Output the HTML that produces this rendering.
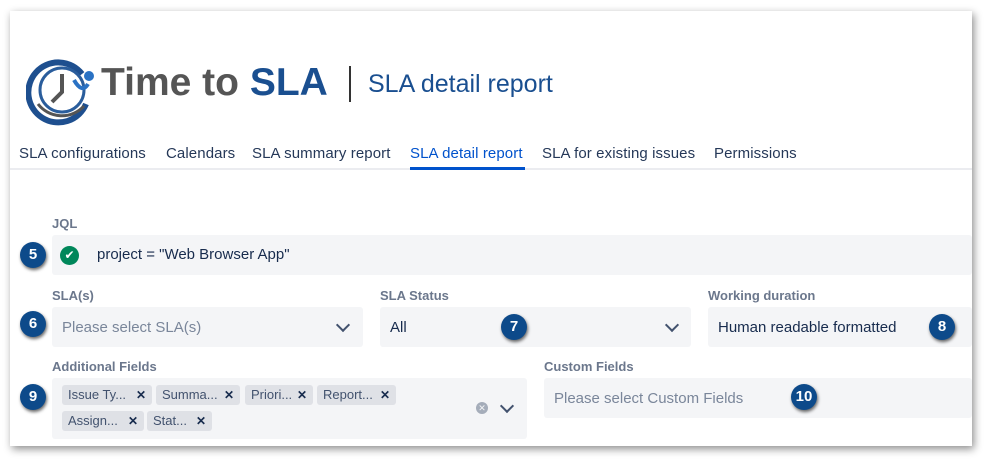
<!DOCTYPE html>
<html><head><style>
body{margin:0;width:999px;height:474px;background:#fff;font-family:"Liberation Sans",sans-serif;position:relative;overflow:hidden}
.card{position:absolute;left:10px;top:11px;width:962px;height:435px;background:#fff;box-shadow:2px 3px 8px rgba(0,0,0,.45)}
.a{position:absolute}
.lbl{position:absolute;font-size:13px;color:#6b778c;font-weight:bold}
.inp{position:absolute;background:#f4f5f7;border-radius:3px}
.ph{position:absolute;font-size:15px;color:#7a869a}
.val{position:absolute;font-size:15px;color:#172b4d}
.b{position:absolute;width:26px;height:26px;border-radius:50%;background:#0d4a8a;color:#fff;font-weight:bold;font-size:15px;text-align:center;line-height:26px;box-shadow:1px 2px 3px rgba(0,0,0,.6)}
.chip{position:absolute;height:20px;background:#dfe1e6;border-radius:3px;font-size:13px;color:#42526e;line-height:20px;padding-left:6px;box-sizing:border-box}
.chip b{position:absolute;right:6px;top:0;font-size:12px;color:#172b4d}
.tab{position:absolute;top:145px;font-size:15px;color:#253858;letter-spacing:0.1px}
.chev{position:absolute;width:8px;height:8px;border-right:2px solid #42526e;border-bottom:2px solid #42526e;transform:rotate(45deg)}
</style></head><body>
<div class="card"></div>
<svg class="a" style="left:26px;top:54px" width="72" height="72" viewBox="0 0 72 72">
<path d="M56 20 A30 30 0 1 0 60 50" fill="none" stroke="#1e4f8f" stroke-width="6"/>
<path d="M12 50 A30 30 0 0 0 58 52" fill="none" stroke="#555" stroke-width="3"/>
<circle cx="36" cy="36" r="22" fill="none" stroke="#2a5d9c" stroke-width="3"/>
<path d="M36 20 V38 L26 48" fill="none" stroke="#555" stroke-width="4"/>
<circle cx="63" cy="22" r="5" fill="#2a72c4"/>
<path d="M48 26 Q56 40 62 30" fill="none" stroke="#2a72c4" stroke-width="4"/>
</svg>
<div class="a" style="left:101px;top:61px;font-size:39px;font-weight:bold;color:#555">Time to <span style="color:#1a4f90">SLA</span></div>
<div class="a" style="left:349px;top:66px;width:2px;height:36px;background:#333"></div>
<div class="a" style="left:368px;top:70px;font-size:25px;color:#1a4f90">SLA detail report</div>
<div class="tab" style="left:19px">SLA configurations</div>
<div class="tab" style="left:166px">Calendars</div>
<div class="tab" style="left:252px">SLA summary report</div>
<div class="tab" style="left:410px;color:#0052cc">SLA detail report</div>
<div class="tab" style="left:542px">SLA for existing issues</div>
<div class="tab" style="left:714px">Permissions</div>
<div class="a" style="left:10px;top:168px;width:962px;height:2px;background:#ebecf0"></div>
<div class="a" style="left:410px;top:167px;width:115px;height:3px;background:#0052cc"></div>
<div class="lbl" style="left:52px;top:216px">JQL</div>
<div class="inp" style="left:52px;top:235px;width:920px;height:40px"></div>
<div class="a" style="left:60px;top:246px;width:19px;height:19px;border-radius:50%;background:#00875a;color:#fff;font-size:12px;text-align:center;line-height:19px">✔</div>
<div class="val" style="left:97px;top:246px">project = "Web Browser App"</div>
<div class="lbl" style="left:52px;top:288px">SLA(s)</div>
<div class="inp" style="left:52px;top:307px;width:311px;height:40px"></div>
<div class="ph" style="left:62px;top:319px">Please select SLA(s)</div>
<div class="chev" style="left:338px;top:320px"></div>
<div class="lbl" style="left:380px;top:288px">SLA Status</div>
<div class="inp" style="left:380px;top:307px;width:311px;height:40px"></div>
<div class="val" style="left:390px;top:319px">All</div>
<div class="chev" style="left:667px;top:320px"></div>
<div class="lbl" style="left:708px;top:288px">Working duration</div>
<div class="inp" style="left:708px;top:307px;width:264px;height:40px"></div>
<div class="val" style="left:718px;top:319px">Human readable formatted</div>
<div class="lbl" style="left:52px;top:359px">Additional Fields</div>
<div class="inp" style="left:52px;top:378px;width:475px;height:61px"></div>
<div class="chip" style="left:62px;top:385px;width:90px">Issue Ty...<b>✕</b></div>
<div class="chip" style="left:156px;top:385px;width:84px">Summa...<b>✕</b></div>
<div class="chip" style="left:245px;top:385px;width:68px">Priori...<b>✕</b></div>
<div class="chip" style="left:317px;top:385px;width:79px">Report...<b>✕</b></div>
<div class="chip" style="left:62px;top:411px;width:82px">Assign...<b>✕</b></div>
<div class="chip" style="left:147px;top:411px;width:65px">Stat...<b>✕</b></div>
<div class="a" style="left:476px;top:402px;width:12px;height:12px;border-radius:50%;background:#a5adba;color:#f4f5f7;font-size:9px;text-align:center;line-height:12px">✕</div>
<div class="chev" style="left:502px;top:401px"></div>
<div class="lbl" style="left:544px;top:359px">Custom Fields</div>
<div class="inp" style="left:544px;top:378px;width:428px;height:40px"></div>
<div class="ph" style="left:554px;top:390px">Please select Custom Fields</div>
<div class="b" style="left:20px;top:242px">5</div>
<div class="b" style="left:20px;top:311px">6</div>
<div class="b" style="left:501px;top:314px">7</div>
<div class="b" style="left:929px;top:314px">8</div>
<div class="b" style="left:20px;top:384px">9</div>
<div class="b" style="left:791px;top:384px">10</div>
</body></html>
